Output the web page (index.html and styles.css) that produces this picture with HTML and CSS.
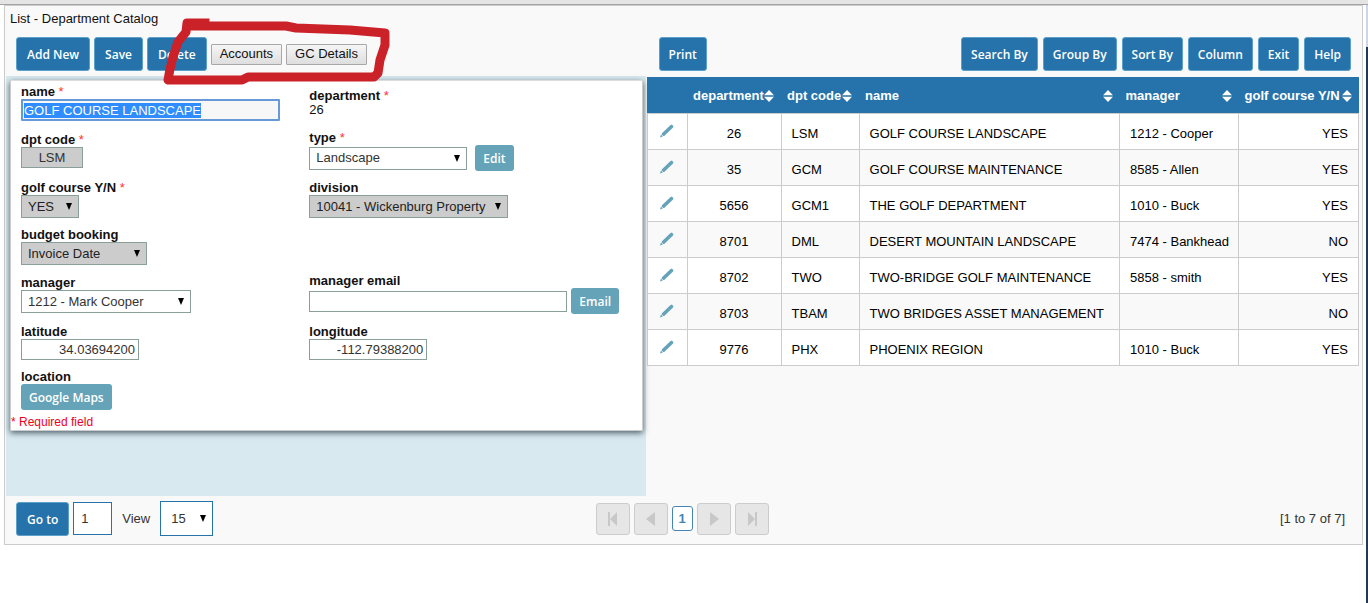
FILE: index.html
```html
<!DOCTYPE html>
<html lang="en">
<head>
<meta charset="utf-8">
<title>Department Catalog</title>
<link rel="stylesheet" href="styles.css">
</head>
<body>
<svg class="symbols" aria-hidden="true">
  <symbol id="pencil" viewBox="0 0 14 14"><path d="M0 13.500L.900 10.500 2.900 12.500zM1.700 9.500L10.300 1.300 11.800.500 13.500 2.200 12.800 3.700 4.200 11.900 3.200 11.900 1.700 10.400z"/></symbol>
  <symbol id="sort" viewBox="0 0 10 12"><path d="M5 0l5 5.200H0zM0 6.800h10L5 12z"/></symbol>
</svg>
<div class="browser-edge"></div>
<div class="page">
<main class="app">
  <h1 class="title">List - Department Catalog</h1>
  <div class="toolbars">
    <div class="toolbar">
      <button class="btn">Add New</button>
      <button class="btn">Save</button>
      <button class="btn">Delete</button>
      <button class="btn-plain">Accounts</button>
      <button class="btn-plain">GC Details</button>
    </div>
    <div class="toolbar toolbar-list">
      <button class="btn">Print</button>
      <span class="spacer"></span>
      <button class="btn">Search By</button>
      <button class="btn">Group By</button>
      <button class="btn">Sort By</button>
      <button class="btn">Column</button>
      <button class="btn">Exit</button>
      <button class="btn">Help</button>
    </div>
  </div>
  <div class="content">
    <section class="detail">
      <form class="card">
        <div class="fields">
          <div class="field">
            <label for="name">name <i>*</i></label>
            <input id="name" class="name-input" value="GOLF COURSE LANDSCAPE" autofocus>
          </div>
          <div class="field field-low">
            <span class="label">department <i>*</i></span>
            <span>26</span>
          </div>
          <div class="field">
            <label for="code">dpt code <i>*</i></label>
            <input id="code" class="box code" value="LSM" readonly>
          </div>
          <div class="field field-action">
            <label for="type">type <i>*</i></label>
            <div class="row row-wide">
              <select id="type" class="box select w-type"><option>Landscape</option></select>
              <button type="button" class="btn-small">Edit</button>
            </div>
          </div>
          <div class="field">
            <label for="golf">golf course Y/N <i>*</i></label>
            <select id="golf" class="box select locked w-golf"><option>YES</option></select>
          </div>
          <div class="field">
            <label for="division">division</label>
            <select id="division" class="box select locked w-division"><option>10041 - Wickenburg Property</option></select>
          </div>
          <div class="field field-full">
            <label for="budget">budget booking</label>
            <select id="budget" class="box select locked w-budget"><option>Invoice Date</option></select>
          </div>
          <div class="field">
            <label for="manager">manager</label>
            <select id="manager" class="box select w-manager"><option>1212 - Mark Cooper</option></select>
          </div>
          <div class="field field-action">
            <label for="email">manager email</label>
            <div class="row">
              <input id="email" class="box w-email">
              <button type="button" class="btn-small">Email</button>
            </div>
          </div>
          <div class="field">
            <label for="lat">latitude</label>
            <input id="lat" class="box coord" value="34.03694200">
          </div>
          <div class="field">
            <label for="lng">longitude</label>
            <input id="lng" class="box coord" value="-112.79388200">
          </div>
          <div class="field field-full">
            <span class="label">location</span>
            <button type="button" class="btn-small">Google Maps</button>
          </div>
        </div>
        <p class="required">* Required field</p>
      </form>
    </section>
    <section class="list">
      <table>
        <colgroup><col class="c-edit"><col class="c-dept"><col class="c-code"><col><col class="c-manager"><col class="c-golf"></colgroup>
        <thead>
          <tr>
            <th></th>
            <th><div class="head">department<svg><use href="#sort"/></svg></div></th>
            <th><div class="head">dpt code<svg><use href="#sort"/></svg></div></th>
            <th><div class="head">name<svg><use href="#sort"/></svg></div></th>
            <th><div class="head">manager<svg><use href="#sort"/></svg></div></th>
            <th><div class="head">golf course Y/N<svg><use href="#sort"/></svg></div></th>
          </tr>
        </thead>
        <tbody>
          <tr><td><a href="#" aria-label="Edit 26"><svg><use href="#pencil"/></svg></a></td><td>26</td><td>LSM</td><td>GOLF COURSE LANDSCAPE</td><td>1212 - Cooper</td><td>YES</td></tr>
          <tr><td><a href="#" aria-label="Edit 35"><svg><use href="#pencil"/></svg></a></td><td>35</td><td>GCM</td><td>GOLF COURSE MAINTENANCE</td><td>8585 - Allen</td><td>YES</td></tr>
          <tr><td><a href="#" aria-label="Edit 5656"><svg><use href="#pencil"/></svg></a></td><td>5656</td><td>GCM1</td><td>THE GOLF DEPARTMENT</td><td>1010 - Buck</td><td>YES</td></tr>
          <tr><td><a href="#" aria-label="Edit 8701"><svg><use href="#pencil"/></svg></a></td><td>8701</td><td>DML</td><td>DESERT MOUNTAIN LANDSCAPE</td><td>7474 - Bankhead</td><td>NO</td></tr>
          <tr><td><a href="#" aria-label="Edit 8702"><svg><use href="#pencil"/></svg></a></td><td>8702</td><td>TWO</td><td>TWO-BRIDGE GOLF MAINTENANCE</td><td>5858 - smith</td><td>YES</td></tr>
          <tr><td><a href="#" aria-label="Edit 8703"><svg><use href="#pencil"/></svg></a></td><td>8703</td><td>TBAM</td><td>TWO BRIDGES ASSET MANAGEMENT</td><td></td><td>NO</td></tr>
          <tr><td><a href="#" aria-label="Edit 9776"><svg><use href="#pencil"/></svg></a></td><td>9776</td><td>PHX</td><td>PHOENIX REGION</td><td>1010 - Buck</td><td>YES</td></tr>
        </tbody>
      </table>
    </section>
  </div>
  <footer class="footer">
    <div class="goto">
      <button class="btn">Go to</button>
      <input class="page-input" value="1" aria-label="Page">
      <label class="view" for="view">View</label>
      <select id="view" class="view-select"><option>15</option></select>
    </div>
    <nav class="pager">
      <button class="page-btn" aria-label="First page"><svg viewBox="0 0 14 14"><path d="M2 0h2v14H2zM11 0v14L4 7z"/></svg></button>
      <button class="page-btn" aria-label="Previous page"><svg viewBox="0 0 14 14"><path d="M11 0v14L2 7z"/></svg></button>
      <a class="current" href="#">1</a>
      <button class="page-btn" aria-label="Next page"><svg viewBox="0 0 14 14"><path d="M3 0l9 7-9 7z"/></svg></button>
      <button class="page-btn" aria-label="Last page"><svg viewBox="0 0 14 14"><path d="M3 0l7 7-7 7zM10 0h2v14h-2z"/></svg></button>
    </nav>
    <span class="count">[1 to 7 of 7]</span>
  </footer>
  <svg class="marker" viewBox="160 14 236 74" aria-hidden="true"><path d="M205 23H187L186 32L178 42L173 57L170 69L168 80H242L248 77H374L378 73L380 60L385 45V33L350 30L296 28L286 26H194"/></svg>
</main>
<div class="window-edge"></div>
</div>
<script src="select.js"></script>
</body>
</html>
```
FILE: styles.css
```css
* { box-sizing: border-box; }
body {
  margin: 0;
  background: #fff;
  color: #111;
  font: 13px/14px "Liberation Sans", Arial, sans-serif;
}
button, input, select { font: inherit; color: inherit; margin: 0; }
.symbols { position: absolute; width: 0; height: 0; }
.browser-edge { height: 5px; background: #e4e4e4; border-bottom: 1px solid #a3a3a3; }
.page { display: flex; gap: 3px; min-height: calc(100vh - 5px); }
.window-edge { width: 2px; background: linear-gradient(#ccd6e8 42px, #23375a 42px); }
.app {
  position: relative;
  flex: 1;
  align-self: flex-start;
  margin-left: 4px;
  padding: 0 0 0 1px;
  border: 1px solid #ccc;
  background: #f9f9f9;
}
.title { margin: 0; padding: 5px 4px; font-size: 13px; font-weight: 400; line-height: 16px; }

.toolbars, .content { display: grid; grid-template-columns: 641fr 716fr; }
.toolbars { padding: 5px 0; }
.toolbar { display: flex; align-items: center; gap: 4px; padding-left: 10px; }
.toolbar-list { gap: 5px; padding: 0 11px 0 12px; }
.spacer { flex: 1; }
.btn, .btn-small {
  color: #fff;
  font-family: "Open Sans", sans-serif;
  font-size: 12px;
  font-weight: 600;
  white-space: nowrap;
}
.btn {
  height: 34px;
  padding: 2px 10px 0;
  border: 1px solid #5ba0c9;
  border-radius: 3px;
  background: #2573aa;
}
.toolbar-list .btn { padding: 2px 9px 0; }
.btn-small { height: 26px; padding: 2px 8px 0; border: 0; border-radius: 3px; background: #65a3b9; }
.btn-plain {
  height: 21px;
  padding: 0 8px;
  border: 1px solid #a8a8a8;
  border-radius: 1px;
  background: linear-gradient(#f6f6f6, #dedede);
}

.detail { margin-right: 1px; padding: 4px 3px 65px 4px; background: #d9e9f0; }
.card { border: 1px solid #ccc; border-top-color: #ddd; background: #fff; box-shadow: 0 2px 6px #4b5f68; }
.fields {
  display: grid;
  grid-template-columns: 289fr 333fr;
  grid-template-rows: 48px 48px 47px 48px 49px 45px auto;
  padding: 4px 0 5px 10px;
}
.field { display: flex; flex-direction: column; align-items: flex-start; }
.field-full { grid-column: 1 / -1; }
.field-low { padding-top: 4px; }
.field-action { margin-top: -2px; }
label, .label { font-weight: 700; }
label i, .label i { color: #f33; font-style: normal; font-weight: 400; }
.row { display: flex; align-items: center; gap: 4px; }
.row-wide { gap: 8px; }
.box { height: 21px; padding: 0 3px; border: 1px solid #8a9f99; border-radius: 0; background: #fff; color: #333; }
.name-input { width: 259px; height: 22px; padding: 0 1px; border: 2px solid #6699d8; border-radius: 1px; outline: 0; background: #f7f7f7; }
.name-input::selection { background: #2f8dff; color: #fff; }
.code { width: 62px; background: #ccc; text-align: center; }
.select, .view-select {
  appearance: none;
  background: #fff url("data:image/svg+xml,%3Csvg xmlns='http://www.w3.org/2000/svg' width='6' height='7'%3E%3Cpath d='M0 0h6L3 7z'/%3E%3C/svg%3E") no-repeat right 6px center;
}
.select { height: 23px; padding: 0 6px; }
.locked { background-color: #ccc; color: #222; }
.w-type { width: 158px; }
.w-golf { width: 58px; }
.w-division { width: 199px; }
.w-budget { width: 126px; }
.w-manager { width: 170px; }
.w-email { width: 258px; }
.coord { width: 118px; text-align: right; }
.required { margin: 0; padding-bottom: 1px; color: #f00020; font-size: 12px; }

.list { padding: 1px 3px 0 0; }
table { width: 100%; table-layout: fixed; border-collapse: collapse; }
.c-edit { width: 40px; }
.c-dept { width: 94px; }
.c-code { width: 78px; }
.c-manager { width: 119px; }
.c-golf { width: 120px; }
th { height: 36px; padding: 2px 7px 0 6px; background: #2573aa; color: #fff; text-align: left; white-space: nowrap; }
.head { display: flex; align-items: center; justify-content: space-between; }
.head svg { flex: none; width: 10px; height: 12px; fill: #fff; }
td { height: 36px; padding: 5px 10px 0; border: 1px solid #ccc; background: #fff; color: #000; white-space: nowrap; }
tbody tr:nth-child(even) td { background: #f9f9f9; }
td:first-child { padding: 2px 0 0; text-align: center; }
td:first-child svg { display: inline-block; width: 14px; height: 14px; fill: #65a3b9; }
td:nth-child(2) { text-align: center; }
td:last-child { text-align: right; }

.footer { display: grid; grid-template-columns: 1fr auto 1fr; align-items: center; height: 48px; padding: 0 17px 3px 13px; color: #333; }
.goto { display: flex; align-items: center; gap: 4px; margin-left: -3px; }
.page-input { width: 39px; height: 33px; padding: 0 7px; border: 1px solid #2573aa; }
.view { padding: 0 6px; font-weight: 400; }
.view-select { width: 53px; height: 35px; padding: 0 10px; border: 1px solid #2573aa; border-radius: 0; }
.pager { display: flex; align-items: center; gap: 4px; }
.page-btn { display: grid; place-items: center; width: 34px; height: 32px; padding: 0; border: 1px solid #ccc; border-radius: 3px; background: #e6e6e6; }
.page-btn svg { width: 14px; height: 14px; fill: #c8c8c8; }
.current {
  width: 21px;
  border: 1px solid #4585b5;
  border-radius: 3px;
  background: #fff;
  color: #4585b5;
  font-weight: 700;
  line-height: 23px;
  text-align: center;
  text-decoration: none;
}
.count { text-align: right; }
.marker { position: absolute; left: 155px; top: 8px; width: 236px; height: 74px; fill: none; stroke: #cb2229; stroke-width: 9px; stroke-linejoin: round; stroke-linecap: square; pointer-events: none; }
```
FILE: select.js
```js
document.getElementById("name").select();
```
